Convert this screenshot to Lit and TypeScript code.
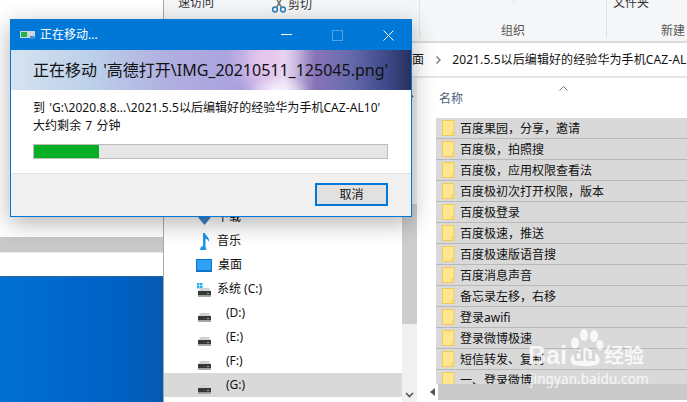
import { LitElement, html, css, svg } from "lit";
import { customElement } from "lit/decorators.js";

const files = ["百度果园，分享，邀请","百度极，拍照搜","百度极，应用权限查看法","百度极初次打开权限，版本","百度极登录","百度极速，推送","百度极速版语音搜","百度消息声音","备忘录左移，右移","登录awifi","登录微博极速","短信转发、复制","一、登录微博"];
const drives = ["(D:)","(E:)","(F:)","(G:)"];

const drive = svg`<svg class="dr" width="15" height="9" viewBox="0 0 15 9"><path d="M1.500 3.500 3 0h9l1.500 3.500z" fill="#d2d2d6"/><rect x="1" y="3" width="13" height="4.500" fill="#38383a"/><rect x="1" y="7.500" width="13" height="1.500" fill="#a8a8a8"/><rect x="10" y="5" width="2" height="1" fill="#4fd04f"/></svg>`;
const folder = svg`<svg class="fi" width="13" height="16" viewBox="0 0 13 16"><rect x=".5" y=".5" width="11.500" height="15" fill="#ffe792" stroke="#f2cb55"/><path d="M10 16v-4h2.500" fill="none" stroke="#f2cb55"/></svg>`;

@customElement("app-root")
export class AppRoot extends LitElement {
  static styles = css`
    *{box-sizing:border-box}
    :host{display:block;position:relative;width:687px;height:402px;overflow:hidden;background:#fff;font:12px/16px "Noto Sans","Noto Sans CJK SC",sans-serif;color:#111}
    .desk{position:absolute;left:0;top:0;width:164px;height:402px;display:flex;flex-direction:column}
    .w1{height:237px;background:#fff}.band{height:16px;background:#c9c9c9;border-bottom:1px solid #e8e8e8}.w2{height:23px;background:#fff}
    .blue{flex:1;background:linear-gradient(90deg,#0070d2,#0062c6 70%,#0658b0);border-top:1px solid #2a659c}
    .exp{position:absolute;left:163px;top:0;width:524px;height:402px;border-left:1px solid #a8a8a8;background:#fff;display:flex;flex-direction:column}
    .rib{height:43px;background:#f5f6f7;border-bottom:2px solid #dadbdc;display:flex;flex:none}
    .g{position:relative;border-right:1px solid #e2e3e4;height:38px;text-align:center;color:#555}
    .g1{width:256px;text-align:left;padding-left:14px;color:#333}
    .g1 span{display:block;margin-top:-5px}
    .g2{width:187px;padding-top:23px}
    .tick{position:absolute;left:93px;top:0;width:1px;height:3px;background:#e2e3e4}
    .g3{flex:1;border:none;padding:23px 0 0 54px;text-align:left;white-space:nowrap}
    .cut{position:absolute;left:107px;top:-3px;display:flex;gap:1px;color:#333;align-items:center}
    .tt{position:absolute;top:-5px;color:#333;left:6px}
    .addr{height:35px;flex:none;border-bottom:2px solid #e5e5e5;padding-left:236px;display:flex;align-items:center;white-space:nowrap;gap:11px;letter-spacing:.1px}
    .addr svg{flex:none}
    .main{flex:1;display:flex;min-height:0}
    .nav{width:238px;padding-top:127px;flex:none;display:flex;flex-direction:column}
    .ni{height:24px;display:flex;align-items:center;padding-left:33px;gap:5px;flex:none}
    .ni svg{flex:none}
    .ni .dr{margin-top:8px}
    .ni .c{margin-left:-1px;margin-right:1px}
    .ni.sel{background:#d9d9d9}
    .ind{margin-left:9px}
    .sb{width:15px;flex:none;background:#f0f0f0;position:relative;padding-top:126px}
    .th{height:120px;background:#cdcdcd}
    .ar{position:absolute;left:3px;bottom:4px}
    .up{position:absolute;left:3px;top:14px}
    .gap{width:19px;flex:none}
    .list{flex:1;min-width:0;position:relative;display:flex;flex-direction:column}
    .hd{height:40px;flex:none;padding:13px 0 0 3px;color:#4c607a;position:relative}
    .chev{position:absolute;left:123px;top:8px}
    .row{height:21px;flex:none;background:#d9d9d9;border-bottom:1px solid #b9b9b9;display:flex;align-items:center;padding-left:6px;gap:5px;white-space:nowrap}
    .row span{padding-top:2px}
    .rows{height:266px;overflow:hidden;flex:none}
    .hsw{position:absolute;left:-10px;right:0;top:306px;height:16px;display:flex;background:#fff;align-items:center;padding-left:4px}
    .hsw div{flex:1;height:16px;background:#c9c9c9;margin-left:3px}
    .wm{position:absolute;left:528px;top:329px;color:#ffffffd0;width:124px;pointer-events:none;line-height:1}
    .wmt{display:flex;align-items:flex-end;height:38px;font:bold 25px/24px "Liberation Sans",sans-serif}
    .paw{position:relative;width:37px;height:38px;flex:none}
    .du{position:absolute;left:6px;bottom:0;color:#d4d4d4;font-size:19px}
    .wmj{font:bold 20px/24px "Noto Sans CJK SC",sans-serif}
    .wms{font:13.500px/14px "Noto Sans",sans-serif;margin-top:5px;letter-spacing:.1px;margin-left:2px;white-space:nowrap}
    .dlg{position:absolute;left:10px;top:19px;width:402px;height:198px;border:1px solid #0078d7;display:flex;flex-direction:column;background:#fff;box-shadow:0 6px 22px #0000004d}
    .tb{height:30px;background:#0078d7;flex:none;display:flex;align-items:center;color:#fff;padding-left:9px;gap:5px}
    .tbt{flex:1}
    .wb{width:45px;display:flex;justify-content:center;align-items:center;margin-left:1px}
    .ban{height:40px;flex:none;padding:0 22px;font-size:16px;word-spacing:2px;display:flex;align-items:center;white-space:nowrap;
      background:radial-gradient(ellipse 30px 14px at 268px 40px,#f4f0fc,#f4f0fc00),radial-gradient(ellipse 40px 40px at 255px 8px,#e9c8ee,#e9c8ee00),linear-gradient(90deg,#d6e3f1,#bcd0ea 20%,#b0aee0 40%,#aaa0de 58%,#d4bce8 64%,#e8dff5 68%,#8874b8 76%,#6a6cae 84%,#3d4a88 94%,#27305f)}
    .bd{flex:1;padding:9px 22px 0;white-space:nowrap;line-height:18px;word-spacing:1px;letter-spacing:.05px}
    .pg{height:15px;margin-top:9px;width:355px;border:1px solid #bcbcbc;background:#e6e6e6}
    .pg div{height:100%;background:#06b025}
    .ft{height:43px;flex:none;background:#f0f0f0;border-top:1px solid #dfdfdf;display:flex;justify-content:flex-end;padding:9px 23px 0 0}
    .btn{width:73px;height:23px;border:2px solid #0078d7;background:#e1e1e1;text-align:center;line-height:19px}
  `;
  render() {
    return html`
    <div class="desk"><div class="w1"></div><div class="band"></div><div class="w2"></div><div class="blue"></div></div>
    <div class="exp">
      <div class="rib">
        <div class="g g1"><span>速访问</span>
          <div class="cut"><svg width="16" height="16" viewBox="0 0 16 16" fill="none" stroke="#2b7fb8" stroke-width="1.500"><circle cx="4" cy="12.500" r="2.400"/><circle cx="12" cy="12.500" r="2.400"/><path d="M5.500 10.500 11 1M10.500 10.500 5 1" stroke="#777"/></svg>剪切</div>
        </div>
        <div class="g g2"><div class="tick"></div>组织</div>
        <div class="g g3"><span class="tt">文件夹</span>新建</div>
      </div>
      <div class="addr"><span>桌面</span><svg width="6" height="8" viewBox="0 0 6 8" fill="none" stroke="#777" stroke-width="1.400"><path d="M1.500 .5 5 4 1.500 7.500"/></svg><span>2021.5.5以后编辑好的经验华为手机CAZ-AL10</span></div>
      <div class="main">
        <div class="nav">
          <div class="ni"><svg width="15" height="16" viewBox="0 0 15 16"><path d="M0 7h15L7.500 16z" fill="#3b83c4"/></svg><span>下载</span></div>
          <div class="ni"><svg width="15" height="17" viewBox="0 0 15 17"><path d="M6 13V0h2c.5 3 5 4 4 9-.5-2-2-3-3.500-3.500V14a3 3 0 1 1-2.500-1z" fill="#1e96ea"/></svg><span>音乐</span></div>
          <div class="ni"><svg class="c" width="16" height="13" viewBox="0 0 16 13"><rect width="16" height="13" fill="#0b74c8"/><rect x="1" y="1" width="14" height="10" fill="#2ea1f2"/></svg><span>桌面</span></div>
          <div class="ni"><svg width="15" height="20" viewBox="0 0 15 20"><path d="M0 4h2.500v2.500H0zM3 4h2.500v2.500H3zM0 7h2.500v2.500H0zM3 7h2.500v2.500H3z" fill="#25b0f0"/><g transform="translate(0 9)"><path d="M1.500 3.500 3 0h9l1.500 3.500z" fill="#d2d2d6"/><rect x="1" y="3" width="13" height="4.500" fill="#38383a"/><rect x="1" y="7.500" width="13" height="1.500" fill="#a8a8a8"/><rect x="10" y="5" width="2" height="1" fill="#4fd04f"/></g></svg><span>系统 (C:)</span></div>
          ${drives.map((d,i)=>html`<div class="ni ${i==3?"sel":""}">${drive}<span class="ind">${d}</span></div>`)}
        </div>
        <div class="sb"><svg class="up" width="9" height="6" viewBox="0 0 9 6" fill="none" stroke="#555" stroke-width="1.600"><path d="M1 5l3.500-3.500L8 5"/></svg><div class="th"></div><svg class="ar" width="9" height="6" viewBox="0 0 9 6" fill="none" stroke="#555" stroke-width="1.600"><path d="M1 1l3.500 3.500L8 1"/></svg></div>
        <div class="gap"></div>
        <div class="list">
          <div class="hd">名称<svg class="chev" width="9" height="5" viewBox="0 0 9 5" fill="none" stroke="#777"><path d="M.5 4.500 4.500.5l4 4"/></svg></div>
          <div class="rows">${files.map(f=>html`<div class="row">${folder}<span>${f}</span></div>`)}</div>
          <div class="hsw"><svg width="5" height="8" viewBox="0 0 5 8" fill="#555"><path d="M5 0v8L0 4z"/></svg><div></div></div>
        </div>
      </div>
    </div>
    <div class="wm"><div class="wmt">
      <span>Bai</span>
      <div class="paw"><svg width="37" height="38" viewBox="0 0 37 38" fill="#ffffffd0"><ellipse cx="17" cy="6" rx="4" ry="6"/><ellipse cx="27" cy="7" rx="4" ry="6"/><ellipse cx="8" cy="14" rx="4" ry="5.500"/><ellipse cx="33" cy="16" rx="3.500" ry="5"/><path d="M7 36c-6-3-4-10 3-13 4-6 11-6 16 0 8 3 9 10 3 13-8 2-14 1-22 0z"/></svg><span class="du">du</span></div>
      <span class="wmj">经验</span></div>
      <div class="wms">jingyan.baidu.com</div>
    </div>
    <div class="dlg">
      <div class="tb">
        <svg width="15" height="9" viewBox="0 0 15 9"><rect width="15" height="7" fill="#cfd6dc"/><rect x="1" y="1" width="6" height="5" fill="#22b14c"/><path d="M10 5h3v-1l2 2.500L13 9V8h-3z" fill="#4a90d0"/></svg>
        <span class="tbt">正在移动...</span>
        <div class="wb"><svg width="11" height="2"><rect width="11" height="1" fill="#fff"/></svg></div>
        <div class="wb"><svg width="11" height="11" fill="none" stroke="#4fa3e8"><rect x=".5" y=".5" width="10" height="10"/></svg></div>
        <div class="wb"><svg width="11" height="11" fill="none" stroke="#fff"><path d="M.5.500l10 10M10.500.5l-10 10"/></svg></div>
      </div>
      <div class="ban">正在移动 '高德打开\\IMG_20210511_125045.png'</div>
      <div class="bd">
        <div>到 'G:\\2020.8.8...\\2021.5.5以后编辑好的经验华为手机CAZ-AL10'</div>
        <div>大约剩余 7 分钟</div>
        <div class="pg"><div style="width:18.500%"></div></div>
      </div>
      <div class="ft"><div class="btn">取消</div></div>
    </div>`;
  }
}
